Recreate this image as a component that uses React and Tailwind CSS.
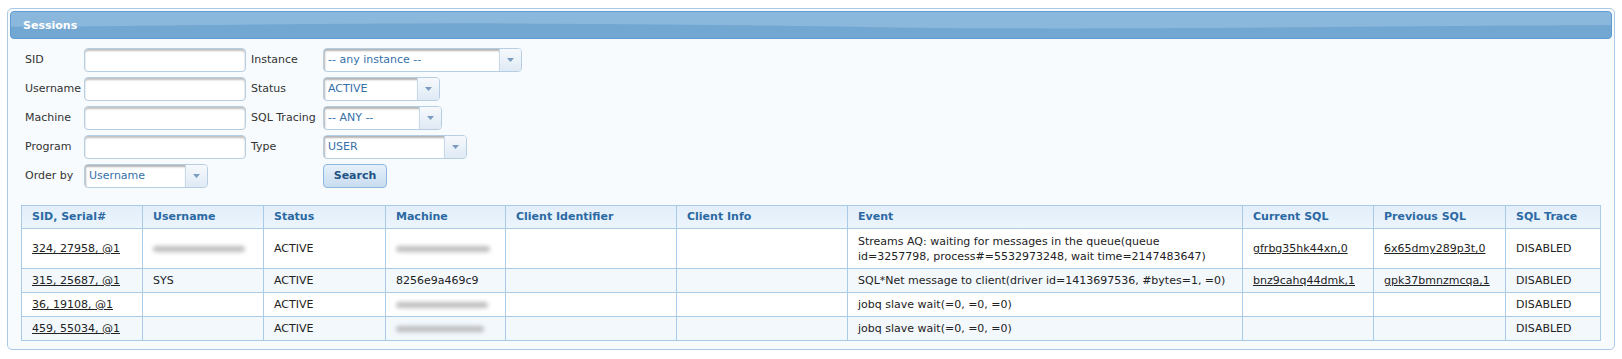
import React from "react";

const fieldRows = [
  { label: "SID", label2: "Instance", select: { value: "-- any instance --", width: "w-[199px]" } },
  { label: "Username", label2: "Status", select: { value: "ACTIVE", width: "w-[117px]" } },
  { label: "Machine", label2: "SQL Tracing", select: { value: "-- ANY --", width: "w-[119px]" } },
  { label: "Program", label2: "Type", select: { value: "USER", width: "w-[144px]" } },
];

const columns = [
  { title: "SID, Serial#", width: "w-[121px]" },
  { title: "Username", width: "w-[121px]" },
  { title: "Status", width: "w-[122px]" },
  { title: "Machine", width: "w-[120px]" },
  { title: "Client Identifier", width: "w-[171px]" },
  { title: "Client Info", width: "w-[171px]" },
  { title: "Event", width: "w-[395px]" },
  { title: "Current SQL", width: "w-[131px]" },
  { title: "Previous SQL", width: "w-[132px]" },
  { title: "SQL Trace", width: "w-[95px]" },
];

const sessions = [
  {
    sid: "324, 27958, @1",
    username: { blur: "w-[92px]" },
    status: "ACTIVE",
    machine: { blur: "w-[94px]" },
    event: "Streams AQ: waiting for messages in the queue(queue id=3257798, process#=5532973248, wait time=2147483647)",
    current: "gfrbg35hk44xn,0",
    previous: "6x65dmy289p3t,0",
    trace: "DISABLED",
    height: "h-[40px]",
  },
  {
    sid: "315, 25687, @1",
    username: "SYS",
    status: "ACTIVE",
    machine: "8256e9a469c9",
    event: "SQL*Net message to client(driver id=1413697536, #bytes=1, =0)",
    current: "bnz9cahq44dmk,1",
    previous: "gpk37bmnzmcqa,1",
    trace: "DISABLED",
  },
  {
    sid: "36, 19108, @1",
    username: "",
    status: "ACTIVE",
    machine: { blur: "w-[92px]" },
    event: "jobq slave wait(=0, =0, =0)",
    current: "",
    previous: "",
    trace: "DISABLED",
  },
  {
    sid: "459, 55034, @1",
    username: "",
    status: "ACTIVE",
    machine: { blur: "w-[88px]" },
    event: "jobq slave wait(=0, =0, =0)",
    current: "",
    previous: "",
    trace: "DISABLED",
  },
];

const TextInput = () => (
  <div className="w-[162px] h-[24px] bg-white border border-[#b7cde1] rounded-[4px] shadow-[inset_0_2px_2px_rgba(0,0,0,0.25)]" />
);

const Select = ({ value, width }) => (
  <div className={`${width} h-[24px] flex bg-white border border-[#b7cde1] rounded-[4px] overflow-hidden`}>
    <div className="flex-1 flex items-center pl-[4px] text-[#3670a9] shadow-[inset_1px_2px_2px_rgba(0,0,0,0.3)]">
      {value}
    </div>
    <div className="w-[22px] flex items-center justify-center border-l border-[#c6d9ea] bg-gradient-to-b from-[#f6f9fc] to-[#dfeaf5]">
      <svg width="7" height="4" viewBox="0 0 7 4">
        <path d="M0 0 L7 0 L3.5 4 Z" fill="#7b9cc0" />
      </svg>
    </div>
  </div>
);

const Blur = ({ width }) => (
  <div className={`${width} h-[6px] rounded-full bg-[#a8a8a8] blur-[2px] opacity-75`} />
);

const Cell = ({ value, link }) => {
  if (value && typeof value === "object") return <Blur width={value.blur} />;
  if (link && value) return <span className="underline">{value}</span>;
  return value;
};

const App = () => {
  return (
    <div
      className="pt-[8px] px-[7px] text-[11px] text-[#222]"
      style={{ fontFamily: '"DejaVu Sans", Verdana, sans-serif' }}
    >
      <div className="border border-[#a9c9e6] rounded-[5px] bg-[#f8fbfd] p-[2px] pb-[8px]">
        <div className="relative h-[28px] rounded-[4px] border border-[#5d9bd2] overflow-hidden bg-[#72a7d2] flex items-center pl-[12px] pt-[2px]">
          <svg
            className="absolute inset-0 w-full h-full"
            viewBox="0 0 1600 28"
            preserveAspectRatio="none"
          >
            <path
              d="M0 0 H1600 V14 C1300 16 1100 19 900 17 C700 13 500 11 300 13 C180 14 80 16 0 16 Z"
              fill="#8ab7dc"
            />
          </svg>
          <span className="relative font-bold text-white">Sessions</span>
        </div>

        <div className="pl-[15px] pt-[9px] flex flex-col gap-[5px] text-[#333]">
          {fieldRows.map((row) => (
            <div key={row.label} className="flex items-center h-[24px]">
              <div className="w-[59px]">{row.label}</div>
              <TextInput />
              <div className="w-[77px] pl-[5px]">{row.label2}</div>
              <Select value={row.select.value} width={row.select.width} />
            </div>
          ))}
          <div className="flex items-center h-[24px]">
            <div className="w-[59px]">Order by</div>
            <Select value="Username" width="w-[124px]" />
            <div className="w-[115px]" />
            <button className="w-[64px] h-[24px] rounded-[4px] border border-[#8fb8de] bg-gradient-to-b from-[#e6f0fa] to-[#c8dcf0] font-bold text-[#1f5285]">
              Search
            </button>
          </div>
        </div>

        <div className="mx-[11px] mt-[17px]">
          <table className="table-fixed border-collapse w-full">
            <colgroup>
              {columns.map((c) => (
                <col key={c.title} className={c.width} />
              ))}
            </colgroup>
            <thead>
              <tr className="bg-gradient-to-b from-[#e2eefa] to-[#edf5fc]">
                {columns.map((c) => (
                  <th
                    key={c.title}
                    className="border border-[#a9cbe7] px-[10px] py-[4px] leading-[14px] text-left font-bold text-[#2b69a3]"
                  >
                    {c.title}
                  </th>
                ))}
              </tr>
            </thead>
            <tbody>
              {sessions.map((s, i) => (
                <tr
                  key={s.sid}
                  className={`${s.height || ""} ${i % 2 === 0 ? "bg-white" : "bg-[#f3f8fd]"}`}
                >
                  {[
                    [s.sid, true],
                    [s.username, false],
                    [s.status, false],
                    [s.machine, false],
                    ["", false],
                    ["", false],
                    [s.event, false],
                    [s.current, true],
                    [s.previous, true],
                    [s.trace, false],
                  ].map(([value, link], j) => (
                    <td
                      key={j}
                      className="border border-[#a9cbe7] px-[10px] py-[4px] leading-[15px] align-middle text-[#222]"
                    >
                      <Cell value={value} link={link} />
                    </td>
                  ))}
                </tr>
              ))}
            </tbody>
          </table>
        </div>
      </div>
    </div>
  );
};

export default App;
